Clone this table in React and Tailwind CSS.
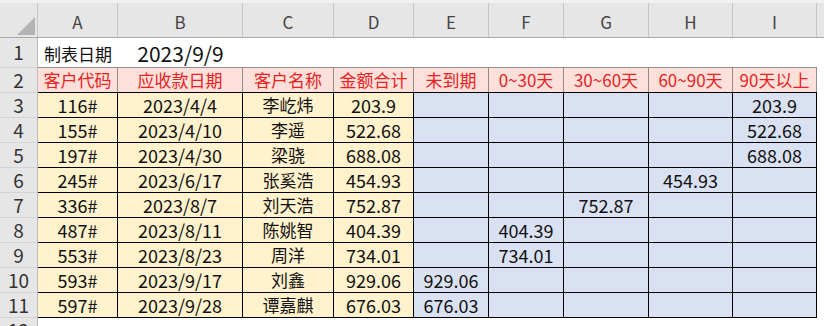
import React from "react";

const font = { fontFamily: '"Noto Sans CJK SC", "Noto Sans", sans-serif' };

const headers = ["客户代码", "应收款日期", "客户名称", "金额合计", "未到期", "0~30天", "30~60天", "60~90天", "90天以上"];

const rows = [
  ["116#", "2023/4/4", "李屹炜", "203.9", "", "", "", "", "203.9"],
  ["155#", "2023/4/10", "李遥", "522.68", "", "", "", "", "522.68"],
  ["197#", "2023/4/30", "梁骁", "688.08", "", "", "", "", "688.08"],
  ["245#", "2023/6/17", "张奚浩", "454.93", "", "", "", "454.93", ""],
  ["336#", "2023/8/7", "刘天浩", "752.87", "", "", "752.87", "", ""],
  ["487#", "2023/8/11", "陈姚智", "404.39", "", "404.39", "", "", ""],
  ["553#", "2023/8/23", "周洋", "734.01", "", "734.01", "", "", ""],
  ["593#", "2023/9/17", "刘鑫", "929.06", "929.06", "", "", "", ""],
  ["597#", "2023/9/28", "谭嘉麒", "676.03", "676.03", "", "", "", ""],
];

const tableCols = "grid grid-cols-[79px_124px_90px_79px_74px_74px_84px_83px_83px] gap-px";

export default function App() {
  return (
    <div className="w-[824px] h-[326px] overflow-hidden bg-white" style={font}>
      {/* column letters */}
      <div className="h-[3px] bg-[#f0f0f0]" />
      <div className="grid grid-cols-[37px_79px_124px_90px_79px_74px_74px_84px_83px_83px_1fr] gap-px bg-[#c6c6c6] h-[34px]">
        <div className="relative bg-[#e6e6e6]">
          <svg className="absolute left-[17px] top-[14px]" width="18" height="18" viewBox="0 0 18 18">
            <polygon points="18,0 18,18 0,18" fill="#b3b3b3" />
          </svg>
        </div>
        {["A", "B", "C", "D", "E", "F", "G", "H", "I"].map((c) => (
          <div key={c} className="flex items-center justify-center bg-[#e6e6e6] text-[17px] text-[#444] pt-[3px]">
            {c}
          </div>
        ))}
        <div className="bg-[#e6e6e6]" />
      </div>
      <div className="h-px bg-[#a8a8a8]" />

      <div className="flex">
        {/* row numbers */}
        <div className="w-[38px] pr-px bg-[#bdbdbd]">
          <div className="flex flex-col gap-px bg-[#d4d4d4] text-[19px] text-[#333]">
            <div className="h-[29px] flex items-center justify-center bg-[#e6e6e6]">1</div>
            {[2, 3, 4, 5, 6, 7, 8, 9, 10, 11, 12].map((n) => (
              <div key={n} className="h-[24px] flex items-center justify-center bg-[#e6e6e6]">
                {n}
              </div>
            ))}
          </div>
        </div>

        <div className="flex flex-col">
          {/* row 1 */}
          <div className="grid grid-cols-[80px_125px] h-[29px] text-[#111]">
            <div className="flex items-center justify-center text-[17px]">制表日期</div>
            <div className="flex items-center justify-center text-[21px]">2023/9/9</div>
          </div>

          {/* row 2 */}
          <div className={`${tableCols} w-[779px] bg-[#8e8e8e] pt-px pr-px`}>
            {headers.map((t) => (
              <div key={t} className="h-[24px] flex items-center justify-center bg-[#fde0da] text-[17px] text-[#e8231f] whitespace-nowrap">
                {t}
              </div>
            ))}
          </div>

          {/* data */}
          <div className={`${tableCols} w-[779px] bg-black pt-px pr-px pb-px`}>
            {rows.map((r, i) =>
              r.map((v, j) => (
                <div
                  key={i + "-" + j}
                  className={`h-[24px] flex items-center justify-center text-[#111] ${j === 2 ? "text-[17px]" : "text-[18px]"} ${j < 4 ? "bg-[#fff2cc]" : "bg-[#d9e1f2]"}`}
                >
                  {v}
                </div>
              ))
            )}
          </div>
        </div>
      </div>
    </div>
  );
}
